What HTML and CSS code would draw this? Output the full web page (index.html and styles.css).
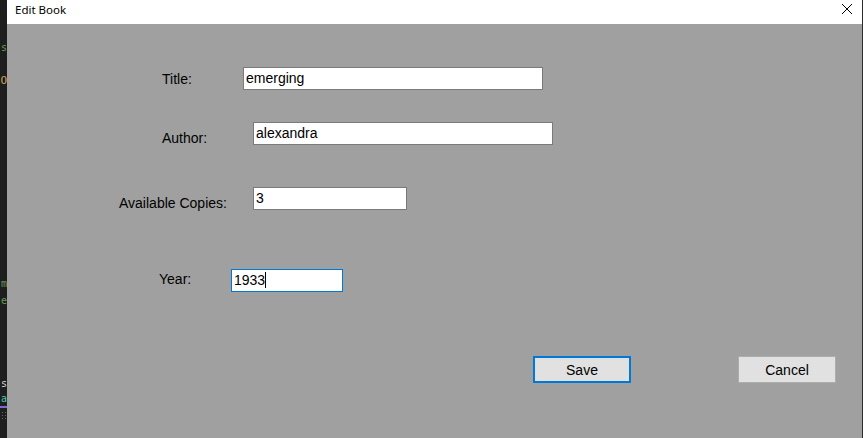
FILE: index.html
```html
<!DOCTYPE html>
<html lang="en">
<head>
<meta charset="utf-8">
<title>Edit Book</title>
<link rel="stylesheet" href="styles.css">
</head>
<body>
<div class="screen">
  <div class="editor-strip">
    <span class="g g1 green">s</span>
    <span class="g g2 orange">O</span>
    <span class="g g3 green">m</span>
    <span class="g g4 green">e</span>
    <span class="g g5 white">s</span>
    <span class="g g6 teal">a</span>
    <span class="purple-line"></span>
    <span class="dots"></span>
  </div>
  <div class="dialog">
    <div class="titlebar">
      <span class="title">Edit Book</span>
      <svg class="close" width="12" height="12" viewBox="0 0 12 12">
        <path d="M1 1 L11 11 M11 1 L1 11" stroke="#000" stroke-width="1" fill="none"/>
      </svg>
    </div>
    <div class="content">
      <div class="row row-title">
        <div class="label">Title:</div>
        <div class="textbox w300">emerging</div>
      </div>
      <div class="row row-author">
        <div class="label">Author:</div>
        <div class="textbox w300">alexandra</div>
      </div>
      <div class="row row-copies">
        <div class="label">Available Copies:</div>
        <div class="textbox w154">3</div>
      </div>
      <div class="row row-year">
        <div class="label">Year:</div>
        <div class="textbox w112 focused">1933<span class="caret"></span></div>
      </div>
      <div class="buttons">
        <button class="btn btn-default">Save</button>
        <button class="btn">Cancel</button>
      </div>
    </div>
  </div>
  <div class="right-edge"></div>
</div>
</body>
</html>
```
FILE: styles.css
```css
html, body {
  margin: 0;
  padding: 0;
  width: 863px;
  height: 438px;
  overflow: hidden;
}
.screen {
  display: flex;
  width: 863px;
  height: 438px;
}
.editor-strip {
  width: 7px;
  flex: none;
  background: #1e1e1e;
  display: flex;
  flex-direction: column;
  align-items: flex-end;
  overflow: hidden;
  font-family: "DejaVu Sans Mono", monospace;
  font-size: 10px;
  line-height: 12px;
}
.g { display: block; width: 7px; text-align: right; white-space: nowrap; }
.g1 { margin-top: 42px; }
.g2 { margin-top: 20px; font-size: 11px; line-height: 14px; }
.g3 { margin-top: 190px; }
.g4 { margin-top: 5px; }
.g5 { margin-top: 71px; }
.g6 { margin-top: 3px; }
.green { color: #6a9955; }
.orange { color: #d7a05a; }
.white { color: #d4d4d4; }
.teal { color: #4ec9b0; }
.purple-line { display: block; width: 7px; height: 2px; background: #7a6ad8; margin-top: 1px; }
.dots {
  display: block;
  width: 5px;
  height: 8px;
  margin-top: 3px;
  margin-right: 1px;
  background-image: radial-gradient(circle, #666 0.8px, transparent 1px);
  background-size: 3px 3px;
}

.dialog {
  flex: 1;
  display: flex;
  flex-direction: column;
  background: #a0a0a0;
}
.right-edge { width: 1px; flex: none; background: #2b2b2b; }

.titlebar {
  height: 24px;
  flex: none;
  background: #ffffff;
  display: flex;
  align-items: center;
  justify-content: space-between;
  padding: 0 9px 0 8px;
}
.title {
  font-family: "Noto Sans", "Open Sans", sans-serif;
  font-size: 11.5px;
  color: #000;
  margin-top: -5px;
}
.close { margin-top: -6px; }

.content {
  flex: 1;
  display: flex;
  flex-direction: column;
  font-family: "Liberation Sans", Arial, sans-serif;
  font-size: 14px;
  color: #000;
}
.row {
  display: flex;
  align-items: flex-start;
  height: 23px;
}
.label { line-height: 16px; white-space: nowrap; }
.textbox {
  box-sizing: border-box;
  height: 23px;
  background: #fff;
  border: 1px solid #7a7a7a;
  padding: 0 2px;
  line-height: 20px;
  white-space: nowrap;
}
.textbox.focused { border-color: #0078d7; }
.caret {
  display: inline-block;
  width: 1px;
  height: 16px;
  background: #000;
  vertical-align: -3px;
}
.w300 { width: 300px; }
.w154 { width: 154px; }
.w112 { width: 112px; }

.row-title { margin-top: 43px; padding-left: 155px; }
.row-title .label { width: 81px; margin-top: 4px; }
.row-author { margin-top: 32px; padding-left: 155px; }
.row-author .label { width: 91px; margin-top: 8px; }
.row-copies { margin-top: 42px; padding-left: 112px; }
.row-copies .label { width: 134px; margin-top: 8px; }
.row-year { margin-top: 59px; padding-left: 152px; }
.row-year .label { width: 72px; margin-top: 2px; }

.buttons {
  display: flex;
  margin-top: 64px;
  padding-left: 526px;
  gap: 107px;
}
.btn {
  box-sizing: border-box;
  width: 98px;
  height: 27px;
  background: #e1e1e1;
  border: 1px solid #adadad;
  font-family: "Liberation Sans", Arial, sans-serif;
  font-size: 14px;
  color: #000;
  padding: 0;
  margin: 0;
}
.btn-default { border: 2px solid #0078d7; }
```
